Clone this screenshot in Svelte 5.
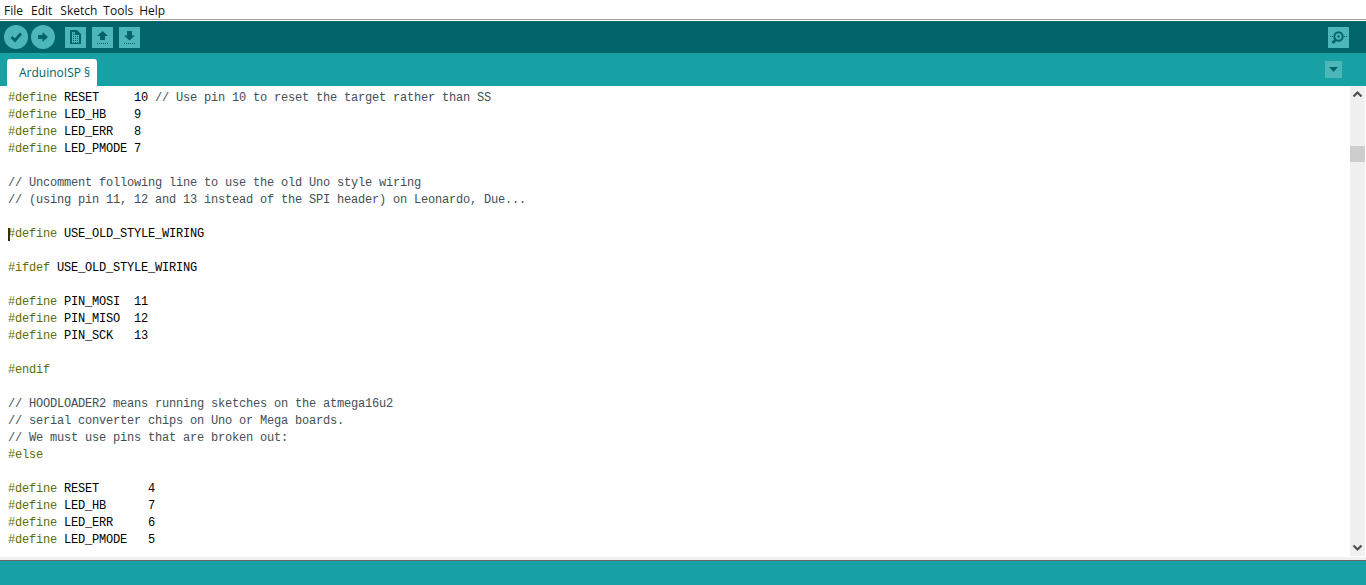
<script>
  const kw = 'kw', cm = 'cm';
  const lines = [
    [['#define', kw], [' RESET     10 '], ['// Use pin 10 to reset the target rather than SS', cm]],
    [['#define', kw], [' LED_HB    9']],
    [['#define', kw], [' LED_ERR   8']],
    [['#define', kw], [' LED_PMODE 7']],
    [],
    [['// Uncomment following line to use the old Uno style wiring', cm]],
    [['// (using pin 11, 12 and 13 instead of the SPI header) on Leonardo, Due...', cm]],
    [],
    [['#define', kw], [' USE_OLD_STYLE_WIRING']],
    [],
    [['#ifdef', kw], [' USE_OLD_STYLE_WIRING']],
    [],
    [['#define', kw], [' PIN_MOSI  11']],
    [['#define', kw], [' PIN_MISO  12']],
    [['#define', kw], [' PIN_SCK   13']],
    [],
    [['#endif', kw]],
    [],
    [['// HOODLOADER2 means running sketches on the atmega16u2', cm]],
    [['// serial converter chips on Uno or Mega boards.', cm]],
    [['// We must use pins that are broken out:', cm]],
    [['#else', kw]],
    [],
    [['#define', kw], [' RESET       4']],
    [['#define', kw], [' LED_HB      7']],
    [['#define', kw], [' LED_ERR     6']],
    [['#define', kw], [' LED_PMODE   5']]
  ];
  const menus = ['File', 'Edit', 'Sketch', 'Tools', 'Help'];
</script>

<div class="app">
  <nav class="menubar">
    {#each menus as m}<span class="menu">{m}</span>{/each}
  </nav>

  <div class="toolbar">
    <button class="round" aria-label="Verify">
      <svg width="24" height="24" viewBox="0 0 24 24"><path d="M7.500 12l3.500 3.500 6-7" fill="none" stroke="#006468" stroke-width="2.800"/></svg>
    </button>
    <button class="round" aria-label="Upload">
      <svg width="24" height="24" viewBox="0 0 24 24"><path d="M7 10h4.500V7l5.500 5-5.500 5v-3H7z" fill="#006468"/></svg>
    </button>
    <button class="square first" aria-label="New">
      <svg width="21" height="21" viewBox="0 0 21 21"><path d="M5 3h7l4 4v10H5z" fill="#006468"/><path d="M7 6h3M7 8.500h7M7 10.500h7M7 12.500h7M7 14.500h7" stroke="#4db6b9" stroke-width="1" fill="none"/><path d="M7.500 5v11M9.500 5v11M11.500 8v8M13.500 8v8" stroke="#4db6b9" stroke-width="1" fill="none"/></svg>
    </button>
    <button class="square" aria-label="Open">
      <svg width="21" height="21" viewBox="0 0 21 21"><path d="M10.500 4l5.500 5h-3v4H8V9H5z" fill="#006468"/><path d="M5 16.500h11" stroke="#006468" stroke-width="1" stroke-dasharray="1 1"/></svg>
    </button>
    <button class="square" aria-label="Save">
      <svg width="21" height="21" viewBox="0 0 21 21"><path d="M8 4h5v4.500h3L10.500 13.500 5 8.500h3z" fill="#006468"/><path d="M5 16.500h11" stroke="#006468" stroke-width="1" stroke-dasharray="1 1"/></svg>
    </button>
    <button class="square monitor" aria-label="Serial Monitor">
      <svg width="21" height="21" viewBox="0 0 21 21"><circle cx="10.500" cy="9.500" r="4.200" fill="none" stroke="#006468" stroke-width="2"/><circle cx="10.500" cy="9.500" r="1.200" fill="#006468"/><path d="M7.500 13l-3 3" stroke="#006468" stroke-width="2.800"/><path d="M2 9.500h3M16 9.500h3" stroke="#006468" stroke-dasharray="1 1"/></svg>
    </button>
  </div>

  <div class="tabs">
    <div class="tab">ArduinoISP §</div>
    <button class="dropdown" aria-label="Tab menu">
      <svg width="17" height="17" viewBox="0 0 17 17"><path d="M4 6h9l-4.500 5z" fill="#006468"/></svg>
    </button>
  </div>

  <div class="editor">
    <div class="code">
      {#each lines as line, i}
        <div class="line">{#if i === 8}<span class="caret"></span>{/if}{#each line as seg}<span class={seg[1]}>{seg[0]}</span>{/each}</div>
      {/each}
    </div>
    <div class="scrollbar">
      <svg class="arrow" width="15" height="17" viewBox="0 0 15 17"><path d="M3.500 10.500l4-4 4 4" fill="none" stroke="#505050" stroke-width="2.200"/></svg>
      <div class="track"><div class="thumb"></div></div>
      <svg class="arrow" width="15" height="17" viewBox="0 0 15 17"><path d="M3.500 6.500l4 4 4-4" fill="none" stroke="#505050" stroke-width="2.200"/></svg>
    </div>
  </div>

  <div class="hscroll"></div>
  <div class="status"></div>
</div>

<style>
  :global(body) { margin: 0; background: #fff; }
  .app { display: flex; flex-direction: column; height: 585px; width: 1366px; overflow: hidden; }
  .menubar { height: 20px; box-sizing: border-box; padding: 1px 0 0 4px; flex: none; display: flex; align-items: center; gap: 7px; background: #fff; font: 12px "Open Sans", sans-serif; color: #111; border-bottom: 1px solid #a0a0a0; margin-bottom: 1px; }
  .menu:nth-child(2), .menu:nth-child(3) { margin-left: 1px; }
  .menu:nth-child(4), .menu:nth-child(5) { margin-left: -1px; }
  .toolbar { height: 32px; flex: none; background: #006468; display: flex; align-items: center; padding: 0 17px 0 4px; }
  button { border: 0; padding: 0; display: block; line-height: 0; }
  .round { width: 24px; height: 24px; border-radius: 50%; background: #4db6b9; margin-right: 3px; }
  .square { width: 21px; height: 21px; background: #4db6b9; margin-right: 6px; margin-top: 1px; }
  .square.first { margin-left: 7px; }
  .square.monitor { margin-left: auto; margin-right: 0; }
  .tabs { height: 33px; flex: none; background: #17a1a5; display: flex; align-items: flex-end; justify-content: space-between; padding: 0 24px 0 7px; }
  .tab { width: 78px; height: 27px; padding-left: 12px; background: #fff; border-radius: 3px 3px 0 0; font: 12px/28px "Open Sans", sans-serif; color: #006468; }
  .dropdown { width: 17px; height: 17px; background: #4db6b9; align-self: flex-start; margin-top: 8px; }
  .editor { height: 470px; flex: none; display: flex; background: #fff; }
  .code { flex: 1; padding: 4px 0 0 8px; font: 12px/17px "Liberation Mono", monospace; letter-spacing: -0.2px; color: #000; overflow: hidden; }
  .line { height: 17px; white-space: pre; position: relative; }
  .kw { color: #5e6d03; }
  .cm { color: #434f54; }
  .caret { position: absolute; left: 0; top: 2px; width: 2px; height: 13px; background: #333300; }
  .scrollbar { width: 15px; margin-right: 1px; background: #f0f0f0; display: flex; flex-direction: column; }
  .arrow { flex: none; display: block; }
  .track { flex: 1; padding-top: 43px; }
  .thumb { height: 16px; background: #cdcdcd; }
  .hscroll { height: 3px; flex: none; margin-top: 1px; background: #f0f0f0; }
  .status { flex: none; height: 25px; background: #17a1a5; border-top: 1px solid #666; box-sizing: border-box; }
</style>
